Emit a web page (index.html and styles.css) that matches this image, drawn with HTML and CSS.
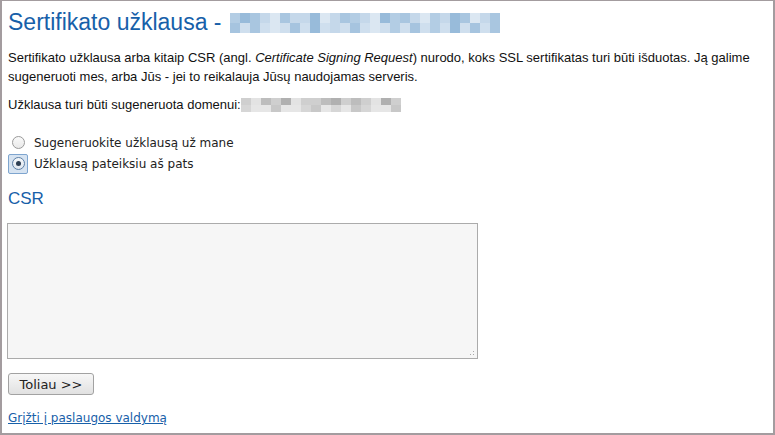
FILE: index.html
```html
<!DOCTYPE html>
<html lang="lt">
<head>
<meta charset="utf-8">
<title>Sertifikato užklausa</title>
<link rel="stylesheet" href="styles.css">
</head>
<body>
<div class="frame">
  <h1 class="title">Sertifikato užklausa - <span class="mosaic mosaic-blue"><span class="row"><i></i><i></i><i></i><i></i><i></i><i></i><i></i><i></i><i></i><i></i><i></i><i></i><i></i><i></i><i></i><i></i><i></i><i></i><i></i><i></i><i></i><i></i><i></i><i></i><i></i><i></i><i></i></span><span class="row"><i></i><i></i><i></i><i></i><i></i><i></i><i></i><i></i><i></i><i></i><i></i><i></i><i></i><i></i><i></i><i></i><i></i><i></i><i></i><i></i><i></i><i></i><i></i><i></i><i></i><i></i><i></i></span></span></h1>

  <p class="intro">Sertifikato užklausa arba kitaip CSR (angl. <em>Certificate Signing Request</em>) nurodo, koks SSL sertifikatas turi būti išduotas. Ją galime sugeneruoti mes, arba Jūs - jei to reikalauja Jūsų naudojamas serveris.</p>

  <p class="domain">Užklausa turi būti sugeneruota domenui:<span class="mosaic mosaic-gray"><span class="row"><i></i><i></i><i></i><i></i><i></i><i></i><i></i><i></i><i></i><i></i><i></i><i></i><i></i><i></i><i></i><i></i></span><span class="row"><i></i><i></i><i></i><i></i><i></i><i></i><i></i><i></i><i></i><i></i><i></i><i></i><i></i><i></i><i></i><i></i></span></span></p>

  <div class="choices">
    <label class="choice"><span class="radio-wrap"><span class="radio"></span></span>Sugeneruokite užklausą už mane</label>
    <label class="choice"><span class="radio-wrap focus"><span class="radio checked"></span></span>Užklausą pateiksiu aš pats</label>
  </div>

  <h2 class="sub">CSR</h2>

  <div class="csr-box"><span class="grip"></span></div>

  <button class="btn" type="button">Toliau &gt;&gt;</button>

  <a class="back" href="#">Grįžti į paslaugos valdymą</a>
</div>
</body>
</html>
```

FILE: styles.css
```css
html, body {
  margin: 0;
  padding: 0;
  background: #fff;
}
.frame {
  box-sizing: border-box;
  width: 775px;
  height: 435px;
  border: 2px solid #a39c9f;
  border-top-width: 1px;
  padding: 0 0 0 6px;
  font-family: "Liberation Sans", Arial, sans-serif;
  font-size: 13px;
  color: #111;
  display: flex;
  flex-direction: column;
  align-items: flex-start;
}
.title {
  margin: 7px 0 0 0;
  font-weight: normal;
  font-size: 23px;
  line-height: 28px;
  color: #1760a9;
  display: flex;
  align-items: center;
  white-space: pre;
}
.mosaic {
  display: inline-flex;
  flex-direction: column;
}
.mosaic .row { display: flex; }
.mosaic i { display: block; }
.mosaic-blue { margin-left: 2px; margin-top: 2px; }
.mosaic-blue i { width: 10px; height: 10px; background: #c5d8ea; }
.mosaic-blue .row i:nth-child(3n) { background: #a9c6e0; }
.mosaic-blue .row i:nth-child(4n+1) { background: #b3cde4; }
.mosaic-blue .row i:nth-child(5n) { background: #dbe7f2; }
.mosaic-blue .row i:nth-child(7n+2) { background: #98bbda; }
.mosaic-blue .row:last-child i:nth-child(2n) { background: #cfdfee; }
.mosaic-blue .row:last-child i:nth-child(6n+1) { background: #a6c4df; }

.mosaic-gray { margin-left: 0; vertical-align: middle; }
.mosaic-gray i { width: 10px; height: 7px; background: #cfcfcf; }
.mosaic-gray .row i:nth-child(3n) { background: #bdbdbd; }
.mosaic-gray .row i:nth-child(4n+2) { background: #e3e3e3; }
.mosaic-gray .row i:nth-child(5n) { background: #b0b0b0; }
.mosaic-gray .row:last-child i { background: #e6e6e6; }
.mosaic-gray .row:last-child i:nth-child(3n+1) { background: #d6d6d6; }
.mosaic-gray .row:last-child i:nth-child(4n) { background: #c8c8c8; }

.intro {
  margin: 12px 0 0 0;
  line-height: 19px;
  padding-right: 10px;
}
.domain {
  margin: 9px 0 0 0;
  line-height: 19px;
  display: flex;
  align-items: center;
}
.choices {
  margin-top: 18px;
  display: flex;
  flex-direction: column;
}
.choice {
  display: flex;
  align-items: center;
  height: 21px;
  font-family: "DejaVu Sans", sans-serif;
  font-size: 12px;
  color: #222;
}
.radio-wrap {
  width: 20px;
  height: 20px;
  box-sizing: border-box;
  display: flex;
  align-items: center;
  justify-content: center;
  margin: 0 6px 0 0;
  border-radius: 2px;
}
.radio-wrap.focus {
  background: #d6e3f1;
  border: 1px solid #7ea5cf;
}
.radio {
  width: 13px;
  height: 13px;
  box-sizing: border-box;
  border-radius: 50%;
  border: 1px solid #9a9a9a;
  background: linear-gradient(#fafafa, #e9e9e9);
  position: relative;
}
.radio.checked {
  border-color: #5d7fa5;
  background: linear-gradient(#f4f7fa, #dfe6ee);
}
.radio.checked::after {
  content: "";
  position: absolute;
  left: 3px;
  top: 3px;
  width: 5px;
  height: 5px;
  border-radius: 50%;
  background: #2d3e52;
}
.sub {
  margin: 15px 0 0 0;
  font-weight: normal;
  font-size: 17px;
  line-height: 20px;
  color: #1760a9;
}
.csr-box {
  margin: 14px 0 0 -1px;
  width: 471px;
  height: 136px;
  box-sizing: border-box;
  border: 1px solid #ababab;
  background: #f6f6f6;
  position: relative;
}
.grip {
  position: absolute;
  right: 1px;
  bottom: 1px;
  width: 10px;
  height: 10px;
  background:
    radial-gradient(circle, #a8a8a8 0.8px, transparent 1px) 0 0 / 3px 3px;
  clip-path: polygon(100% 0, 100% 100%, 0 100%);
}
.btn {
  margin: 14px 0 0 0;
  width: 86px;
  height: 22px;
  font-family: "DejaVu Sans", sans-serif;
  font-size: 13px;
  color: #222;
  border: 1px solid #a2a2a2;
  border-radius: 3px;
  background: linear-gradient(#f7f7f7, #e1e1e1);
  padding: 0;
}
.back {
  margin-top: 16px;
  font-family: "DejaVu Sans", sans-serif;
  font-size: 12px;
  color: #1760a9;
  text-decoration: underline;
}
```
